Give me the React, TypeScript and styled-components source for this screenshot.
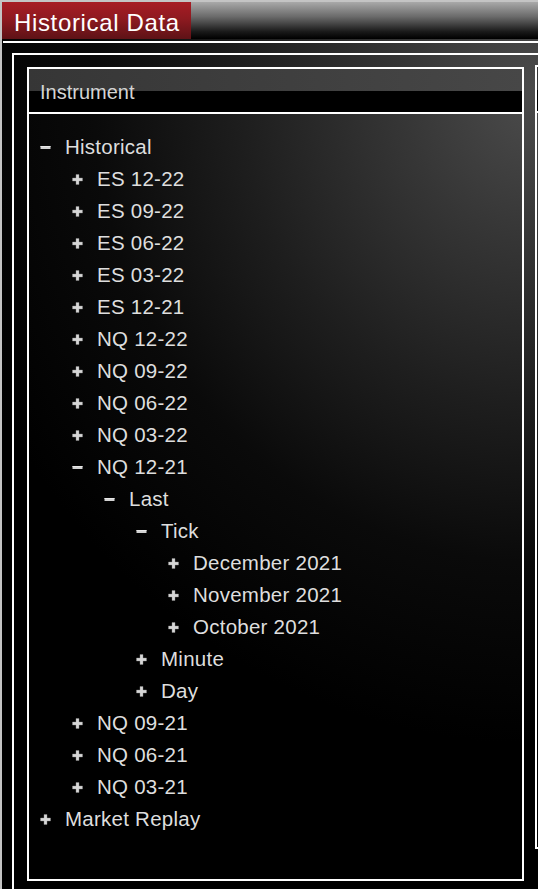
import React from "react";
import styled, { createGlobalStyle } from "styled-components";

const GlobalStyle = createGlobalStyle`
  html, body {
    margin: 0;
    padding: 0;
    height: 100%;
    background: #c4c4c4;
    overflow: hidden;
    font-family: "Liberation Sans", Arial, sans-serif;
  }
`;

type Node = { label: string; open?: boolean; children?: Node[] };

const months: Node[] = [
  { label: "December 2021" },
  { label: "November 2021" },
  { label: "October 2021" },
];

const tree: Node[] = [
  {
    label: "Historical",
    open: true,
    children: [
      { label: "ES 12-22" },
      { label: "ES 09-22" },
      { label: "ES 06-22" },
      { label: "ES 03-22" },
      { label: "ES 12-21" },
      { label: "NQ 12-22" },
      { label: "NQ 09-22" },
      { label: "NQ 06-22" },
      { label: "NQ 03-22" },
      {
        label: "NQ 12-21",
        open: true,
        children: [
          {
            label: "Last",
            open: true,
            children: [
              { label: "Tick", open: true, children: months },
              { label: "Minute" },
              { label: "Day" },
            ],
          },
        ],
      },
      { label: "NQ 09-21" },
      { label: "NQ 06-21" },
      { label: "NQ 03-21" },
    ],
  },
  { label: "Market Replay" },
];

const Toggle = ({ open }: { open?: boolean }) =>
  open ? (
    <svg width="11" height="11" viewBox="0 0 11 11">
      <rect x="0.5" y="4" width="10" height="3" fill="#d2d2d2" />
      <rect x="0.5" y="4" width="10" height="1" fill="#e8e8e8" />
    </svg>
  ) : (
    <svg width="11" height="11" viewBox="0 0 11 11">
      <path
        d="M4 0.5h3v3.5h3.5v3h-3.5v3.5h-3v-3.5h-3.5v-3h3.5z"
        fill="#d6d6d6"
        stroke="#8a8a8a"
        strokeWidth="0.4"
      />
    </svg>
  );

function flatten(nodes: Node[], level = 0, out: { node: Node; level: number }[] = []) {
  nodes.forEach((node) => {
    out.push({ node, level });
    if (node.open && node.children) flatten(node.children, level + 1, out);
  });
  return out;
}

function App() {
  const rows = flatten(tree);
  return (
    <>
      <GlobalStyle />
      <Window>
        <TitleBar>
          <TitleTab>Historical Data</TitleTab>
        </TitleBar>
        <Content>
          <TopRule />
          <Frame>
            <Panel $width={497} $height={814}>
              <PanelHeader $height={45}>Instrument</PanelHeader>
              <Tree>
                {rows.map(({ node, level }, i) => (
                  <Row key={i} $level={level}>
                    <IconBox>
                      <Toggle open={node.open} />
                    </IconBox>
                    <Label>{node.label}</Label>
                  </Row>
                ))}
              </Tree>
            </Panel>
            <Panel $width={300} $height={784} $shift={-2} $open>
              <PanelHeader $height={46} />
              <Tree />
            </Panel>
          </Frame>
        </Content>
      </Window>
    </>
  );
}

const Window = styled.div`
  margin: 2px 0 0 2px;
  height: calc(100vh - 2px);
  display: flex;
  flex-direction: column;
  overflow: hidden;
`;

const TitleBar = styled.div`
  height: 37px;
  flex: none;
  display: flex;
  background: linear-gradient(to bottom, #a9a9a9 0%, #6a6a6a 40%, #1a1a1a 80%, #000 100%);
`;

const TitleTab = styled.div`
  width: 189px;
  height: 37px;
  overflow: hidden;
  box-sizing: border-box;
  padding-left: 12px;
  line-height: 41px;
  font-size: 24px;
  letter-spacing: 0.65px;
  color: #fff;
  white-space: nowrap;
  background: linear-gradient(to bottom, #a71c24 0%, #8e1a20 45%, #5e1216 100%);
`;

const Content = styled.div`
  flex: 1;
  padding-top: 2px;
  background:
    radial-gradient(ellipse 115% 70% at 100% 6%, #4c4c4c 0%, #363636 22%, #1e1e1e 48%, #0a0a0a 72%, rgba(0, 0, 0, 0) 100%),
    #000;
`;

const TopRule = styled.div`
  margin-left: 1px;
  border-top: 2px solid #fff;
`;

const Frame = styled.div`
  margin: 10px 0 0 10px;
  border: 2px solid #fff;
  border-right: none;
  border-bottom: none;
  padding: 12px 0 0 13px;
  height: 900px;
  display: flex;
  align-items: flex-start;
  gap: 11px;
`;

const Panel = styled.div<{ $width: number; $height: number; $shift?: number; $open?: boolean }>`
  flex: none;
  width: ${(p) => p.$width}px;
  height: ${(p) => p.$height}px;
  margin-top: ${(p) => p.$shift ?? 0}px;
  box-sizing: border-box;
  border: 2px solid #fff;
  border-right: ${(p) => (p.$open ? "none" : "2px solid #fff")};
  display: flex;
  flex-direction: column;
`;

const PanelHeader = styled.div<{ $height: number }>`
  flex: none;
  height: ${(p) => p.$height}px;
  box-sizing: border-box;
  border-bottom: 2px solid #fff;
  padding: 2px 0 0 11px;
  line-height: 43px;
  font-size: 20px;
  color: #d4d4d4;
  background: linear-gradient(to bottom, rgba(0, 0, 0, 0) 0 52%, #000 52% 100%),
    linear-gradient(to right, #363636, #474747);
`;

const Tree = styled.div`
  flex: 1;
  padding-top: 17px;
`;

const Row = styled.div<{ $level: number }>`
  height: 32px;
  display: flex;
  align-items: center;
  padding-left: ${(p) => 11 + p.$level * 32}px;
`;

const IconBox = styled.span`
  width: 25px;
  flex: none;
  display: flex;
  align-items: center;
`;

const Label = styled.span`
  font-size: 20.5px;
  letter-spacing: 0.25px;
  line-height: 32px;
  color: #dedede;
  white-space: nowrap;
`;

export default App;
